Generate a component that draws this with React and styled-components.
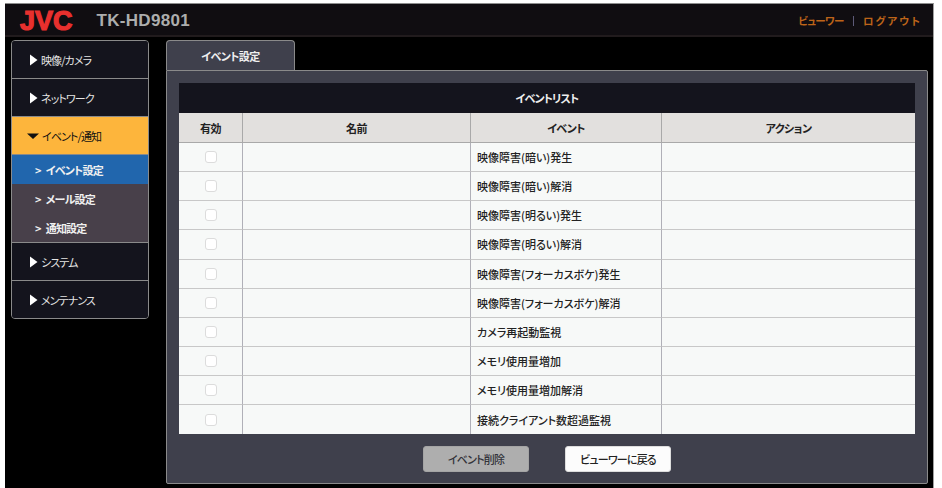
import React from 'react';
import styled, { createGlobalStyle } from 'styled-components';

const Global = createGlobalStyle`
  html, body { margin: 0; padding: 0; background: #fff; }
  body { font-family: "Noto Sans CJK JP", "Liberation Sans", sans-serif; font-feature-settings: "palt"; }
`;
const Page = styled.div`
  width: 929px; height: 485px; margin: 3px 0 0 5px; background: #000;
  border-top: 1px solid #8d8d8d; border-right: 1px solid #a0a0a0; box-sizing: border-box;
  display: flex; flex-direction: column; overflow: hidden;
`;
const Header = styled.header`
  height: 33px; flex: none; box-sizing: border-box; display: flex; align-items: center;
  background: #100d11; border-bottom: 2px solid #211b1d; padding: 2px 11px 0 15px;
`;
const Logo = styled.span`
  font: 900 27px/30px "Liberation Sans", sans-serif; color: #e8302e;
  -webkit-text-stroke: 1.2px #e8302e; margin-top: 1px;
`;
const Model = styled.span`
  font: 700 17px/20px "Liberation Sans", sans-serif; color: #adadad; margin-left: 24px; letter-spacing: 0.3px;
`;
const HeaderLinks = styled.nav`
  margin-left: auto; display: flex; align-items: center; font-size: 10.5px; color: #bd6419; font-weight: 700;
`;
const LinkA = styled.span` letter-spacing: -0.6px; `;
const LinkB = styled.span` letter-spacing: 2px; `;
const Sep = styled.span` width: 1px; height: 10px; background: #5d5a78; margin: 0 9px 0 9px; `;
const Main = styled.div`
  flex: 1; display: flex; align-items: flex-start; padding: 3px 5px 0 6px; gap: 17px; min-height: 0;
`;
const Side = styled.aside`
  width: 138px; flex: none; box-sizing: border-box; border: 1px solid #8a8a8a; border-radius: 4px;
  overflow: hidden; background: #14141d; display: flex; flex-direction: column;
`;
const NavItem = styled.div`
  height: ${p => p.$h || 38}px; box-sizing: border-box; display: flex; align-items: center;
  padding-left: ${p => (p.$open ? 15 : 18)}px; gap: 3px; letter-spacing: -0.9px;
  font-size: 11px; color: ${p => (p.$open ? '#111' : '#e4e4e4')};
  background: ${p => (p.$open ? '#fdb53c' : '#14141d')};
  border-bottom: ${p => (p.$last ? 'none' : '1px solid #8a8a8a')};
`;
const Arrow = styled.svg` width: 8px; height: 12px; flex: none; `;
const ArrowDown = styled.svg` width: 12px; height: 12px; flex: none; `;
const SubItem = styled.div`
  height: ${p => (p.$end ? 30 : 29)}px; box-sizing: border-box; display: flex; align-items: center; padding-left: 23px; gap: 5px;
  font-size: 11px; font-weight: 700; color: #f0f0f0; letter-spacing: -0.8px;
  background: ${p => (p.$active ? '#2166ad' : '#48404a')};
  border-bottom: ${p => (p.$end ? '1px solid #8a8a8a' : 'none')};
`;
const Content = styled.section`
  width: 762px; flex: none; display: flex; flex-direction: column; align-items: flex-start;
`;
const Tab = styled.div`
  width: 129px; height: 30px; box-sizing: border-box; background: #3f404c; border: 1px solid #8a8a8a; border-bottom: none;
  border-radius: 4px 4px 0 0; display: flex; align-items: center; justify-content: center;
  font-size: 11px; font-weight: 700; color: #efefef; letter-spacing: -0.6px;
`;
const Panel = styled.div`
  width: 762px; height: 414px; box-sizing: border-box; background: #3f404c; border: 1px solid #8a8a8a;
  border-radius: 0 2px 2px 2px; padding: 12px 12px 0 12px; display: flex; flex-direction: column;
`;
const TableBox = styled.div` width: 736px; display: flex; flex-direction: column; `;
const Title = styled.div`
  height: 30px; background: #14141d; color: #eee; font-size: 11px; font-weight: 700; letter-spacing: -0.9px;
  display: flex; align-items: center; justify-content: center;
`;
const Grid = styled.div`
  display: grid; grid-template-columns: 63px 228px 191px 254px;
`;
const Th = styled.div`
  height: 30px; box-sizing: border-box; background: #e2e0de; color: #222; font-size: 11px; font-weight: 700; letter-spacing: -0.6px;
  display: flex; align-items: center; justify-content: center;
  border-bottom: 1px solid #a9a9a9; border-left: ${p => (p.$first ? 'none' : '1px solid #a9a9a9')};
`;
const Td = styled.div`
  height: 29.15px; box-sizing: border-box; background: #f7f9f8; color: #222; font-size: 11px; font-weight: 500;
  display: flex; align-items: center; justify-content: ${p => (p.$center ? 'center' : 'flex-start')};
  padding-left: ${p => (p.$pad ? 6 : 0)}px;
  border-bottom: ${p => (p.$last ? 'none' : '1px solid #c8c8c8')};
  border-left: ${p => (p.$first ? 'none' : '1px solid #b0b0b8')};
`;
const Check = styled.span`
  width: 12px; height: 12px; box-sizing: border-box; border: 1px solid #dcdcdc; border-radius: 3px; background: #fff; display: block;
`;
const Actions = styled.div`
  display: flex; justify-content: center; gap: 36px; margin-top: 12px;
`;
const Btn = styled.button`
  width: 106px; height: 26px; padding: 0; border: 1px solid ${p => (p.$off ? '#a4a4a4' : '#ddd')}; border-radius: 3px;
  background: ${p => (p.$off ? '#aeaeae' : '#fcfcfc')}; color: ${p => (p.$off ? '#33333a' : '#222')};
  font: 500 11px "Noto Sans CJK JP", sans-serif; font-feature-settings: "palt"; letter-spacing: -0.8px;
`;

const Right = () => <Arrow viewBox="0 0 8 12"><path d="M0 0.5 L7.5 6 L0 11.5 Z" fill="#fff" /></Arrow>;
const Down = () => <ArrowDown viewBox="0 0 12 12"><path d="M0 3.5 L12 3.5 L6 9 Z" fill="#111" /></ArrowDown>;

const events = ['映像障害(暗い)発生', '映像障害(暗い)解消', '映像障害(明るい)発生', '映像障害(明るい)解消', '映像障害(フォーカスボケ)発生', '映像障害(フォーカスボケ)解消', 'カメラ再起動監視', 'メモリ使用量増加', 'メモリ使用量増加解消', '接続クライアント数超過監視'];

export default function App() {
  return (
    <>
      <Global />
      <Page>
        <Header>
          <Logo>JVC</Logo>
          <Model>TK-HD9801</Model>
          <HeaderLinks><LinkA>ビューワー</LinkA><Sep /><LinkB>ログアウト</LinkB></HeaderLinks>
        </Header>
        <Main>
          <Side>
            <NavItem><Right />映像/カメラ</NavItem>
            <NavItem><Right />ネットワーク</NavItem>
            <NavItem $open><Down />イベント/通知</NavItem>
            <SubItem $active><span>&gt;</span>イベント設定</SubItem>
            <SubItem><span>&gt;</span>メール設定</SubItem>
            <SubItem $end><span>&gt;</span>通知設定</SubItem>
            <NavItem><Right />システム</NavItem>
            <NavItem $last $h={37}><Right />メンテナンス</NavItem>
          </Side>
          <Content>
            <Tab>イベント設定</Tab>
            <Panel>
              <TableBox>
                <Title>イベントリスト</Title>
                <Grid>
                  <Th $first>有効</Th><Th>名前</Th><Th>イベント</Th><Th>アクション</Th>
                  {events.map((e, i) => {
                    const last = i === events.length - 1;
                    return (
                      <React.Fragment key={e}>
                        <Td $first $center $last={last}><Check /></Td>
                        <Td $last={last} />
                        <Td $pad $last={last}>{e}</Td>
                        <Td $last={last} />
                      </React.Fragment>
                    );
                  })}
                </Grid>
              </TableBox>
              <Actions>
                <Btn $off>イベント削除</Btn>
                <Btn>ビューワーに戻る</Btn>
              </Actions>
            </Panel>
          </Content>
        </Main>
      </Page>
    </>
  );
}
